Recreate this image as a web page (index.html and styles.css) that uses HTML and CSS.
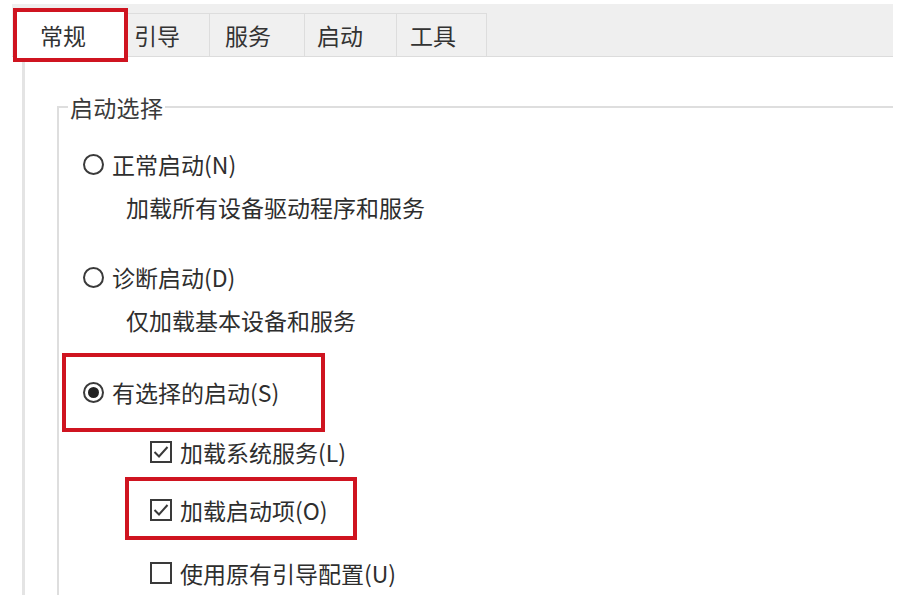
FILE: index.html
```html
<!DOCTYPE html>
<html lang="zh-CN">
<head>
<meta charset="utf-8">
<title>系统配置</title>
<link rel="stylesheet" href="styles.css">
</head>
<body>
<div class="window">
  <div class="tabs">
    <div class="tab active">常规</div>
    <div class="tab tab-guide">引导</div>
    <div class="tab tab-service">服务</div>
    <div class="tab tab-startup">启动</div>
    <div class="tab tab-tools">工具</div>
  </div>
  <div class="page">
    <fieldset class="group">
      <legend>启动选择</legend>
      <div class="opt opt-first"><span class="radio"></span>正常启动(N)</div>
      <div class="desc">加载所有设备驱动程序和服务</div>
      <div class="opt opt-second"><span class="radio"></span>诊断启动(D)</div>
      <div class="desc">仅加载基本设备和服务</div>
      <div class="mark mark-select">
        <div class="opt"><span class="radio checked"></span>有选择的启动(S)</div>
      </div>
      <div class="opt check check-first">
        <svg class="box" width="22" height="22" viewBox="0 0 22 22"><rect x="1" y="1" width="20" height="20" fill="#fff" stroke="#3a3a3a" stroke-width="2"/><path d="M4.5 11 L9 15.5 L17.5 6" fill="none" stroke="#3a3a3a" stroke-width="2"/></svg>加载系统服务(L)
      </div>
      <div class="mark mark-items">
        <div class="opt"><svg class="box" width="22" height="22" viewBox="0 0 22 22"><rect x="1" y="1" width="20" height="20" fill="#fff" stroke="#3a3a3a" stroke-width="2"/><path d="M4.5 11 L9 15.5 L17.5 6" fill="none" stroke="#3a3a3a" stroke-width="2"/></svg>加载启动项(O)</div>
      </div>
      <div class="opt check check-last">
        <svg class="box" width="22" height="22" viewBox="0 0 22 22"><rect x="1" y="1" width="20" height="20" fill="#fff" stroke="#3a3a3a" stroke-width="2"/></svg>使用原有引导配置(U)
      </div>
    </fieldset>
  </div>
</div>
</body>
</html>
```
FILE: styles.css
```css
* { box-sizing: border-box; }

body {
  margin: 0;
  background: #fff;
  color: #2e2e2e;
  font-family: "Noto Sans CJK SC", "Noto Sans", sans-serif;
  font-size: 23px;
}

.window {
  margin: 4px 0 0 12px;
  width: 881px;
  height: 591px;
  overflow: hidden;
}

.tabs {
  height: 53px;
  background: #efefef;
  border-bottom: 1px solid #dcdcdc;
  display: flex;
  align-items: flex-end;
}

.tab {
  height: 43px;
  border: 1px solid #dddddd;
  border-bottom: none;
  background: #f0f0f0;
  display: flex;
  align-items: center;
  padding-left: 13px;
  margin-left: -1px;
  line-height: 1;
  color: #333;
}

.tab.active {
  width: 115px;
  height: 54px;
  margin: 0 0 -6px 1px;
  border: 4px solid #cf1420;
  background: #fff;
  padding-left: 23px;
  position: relative;
  z-index: 1;
}

.tab-guide { width: 83px; padding-left: 6px; }
.tab-service { width: 96px; padding-left: 15px; }
.tab-startup { width: 93px; padding-left: 12px; }
.tab-tools { width: 91px; padding-left: 13px; }

.page {
  margin-left: 10px;
  height: 540px;
  border-left: 3px solid #e4e4e4;
  padding: 35px 0 0 32px;
}

.group {
  margin: 0;
  width: 900px;
  height: 520px;
  border: 2px solid #dedede;
  border-right: none;
  border-bottom: none;
  padding: 0 0 0 9px;
  min-width: 0;
}

.group legend {
  padding: 0 2px;
  line-height: 30px;
  color: #3a3a3a;
  letter-spacing: 0.3px;
}

.opt {
  display: flex;
  align-items: center;
  height: 30px;
  line-height: 30px;
  white-space: nowrap;
}

.opt-first { margin: 27px 0 0 15px; }
.opt-second { margin: 40px 0 0 15px; }

.desc {
  height: 30px;
  line-height: 30px;
  margin: 13px 0 0 58px;
  white-space: nowrap;
}

.radio {
  width: 21px;
  height: 21px;
  border: 2px solid #3a3a3a;
  border-radius: 50%;
  margin-right: 8px;
  background: #fff;
  display: flex;
  align-items: center;
  justify-content: center;
  flex: none;
}

.radio.checked::after {
  content: "";
  width: 11px;
  height: 11px;
  border-radius: 50%;
  background: #222;
}

.mark {
  border: 4px solid #cf1420;
}

.mark-select {
  margin: 18px 0 0 -6px;
  width: 263px;
  padding: 20px 0 21px 17px;
}

.mark-items {
  margin: 10px 0 0 57px;
  width: 232px;
  padding: 14px 0 11px 21px;
}

.box {
  flex: none;
  margin-right: 8px;
}

.check-first { margin: 5px 0 0 82px; }
.check-last { margin: 18px 0 0 82px; }
```
